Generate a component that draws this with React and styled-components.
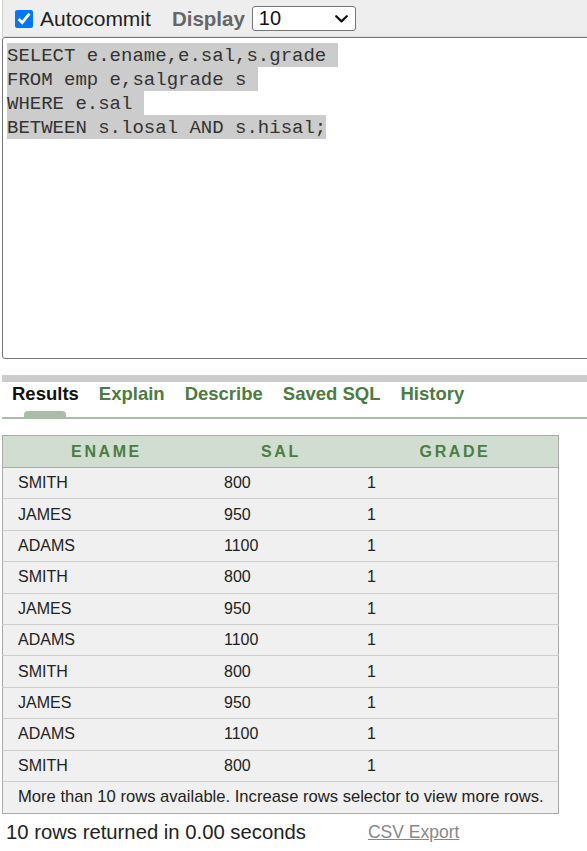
import React from "react";
import styled, { createGlobalStyle } from "styled-components";

const Global = createGlobalStyle`
  html, body { margin: 0; padding: 0; background: #fff; overflow: hidden; }
  body { font-family: "Liberation Sans", Arial, sans-serif; color: #222; }
`;

const Page = styled.div`
  padding-left: 2px;
  width: 640px;
`;

const TopBar = styled.div`
  display: flex;
  align-items: center;
  height: 36px;
  background: #eeeeee;
  border-left: 1px solid #cfcfcf;
  border-bottom: 1px solid #dcdcdc;
  padding-left: 12px;
`;

const Check = styled.input`
  width: 18px;
  height: 18px;
  margin: 1px 0 0 0;
  accent-color: #0075ff;
`;

const Label = styled.span`
  font-size: 21px;
  color: #222;
  margin-left: 7px;
  margin-top: 2px;
`;

const DisplayLabel = styled.span`
  font-size: 20.5px;
  font-weight: bold;
  color: #666;
  margin-left: 21px;
  margin-top: 2px;
`;

const SelectWrap = styled.div`
  position: relative;
  margin-left: 7px;
  width: 104px;
  height: 25px;
`;

const Select = styled.select`
  appearance: none;
  -webkit-appearance: none;
  width: 104px;
  height: 25px;
  box-sizing: border-box;
  border: 1px solid #767676;
  border-radius: 3px;
  background: #fff;
  font-family: "Liberation Sans", Arial, sans-serif;
  font-size: 20px;
  color: #111;
  padding: 0 0 0 6px;
  line-height: 23px;
  margin: 0;
`;

const Chevron = styled.svg`
  position: absolute;
  right: 8px;
  top: 9px;
  pointer-events: none;
`;

const Editor = styled.div`
  box-sizing: border-box;
  height: 322px;
  border: 1px solid #767676;
  border-radius: 3px;
  padding: 5px 4px;
  font-family: "Liberation Mono", "DejaVu Sans Mono", monospace;
  font-size: 19px;
  line-height: 24px;
  color: #333;
  background: #fff;
`;

const Line = styled.div`
  white-space: pre;
  height: 24px;
`;

const Sel = styled.span`
  background: #cccccc;
  display: inline-block;
  height: 24px;
  padding-top: 1px;
  box-sizing: border-box;
`;

const Divider = styled.div`
  margin-top: 16px;
  height: 7px;
  background: #cccccc;
`;

const TabBar = styled.div`
  display: flex;
  gap: 20px;
  padding-left: 10px;
  height: 35px;
  border-bottom: 2px solid #a8bfa5;
`;

const Tab = styled.div`
  display: flex;
  flex-direction: column;
  align-items: center;
  font-size: 18.5px;
  font-weight: bold;
  line-height: 23px;
  color: ${(p) => (p.$active ? "#111" : "#4a7d41")};
`;

const Indicator = styled.div`
  margin-top: auto;
  width: 42px;
  height: 6px;
  border-radius: 4px 4px 0 0;
  background: #a8bfa5;
`;

const Table = styled.table`
  margin-top: 16px;
  width: 557px;
  border-collapse: collapse;
  border: 1px solid #a9a9a9;
  font-size: 16px;
`;

const Th = styled.th`
  height: 31px;
  padding: 0;
  background: #d2ddd1;
  color: #4a7d41;
  font-size: 16px;
  font-weight: bold;
  letter-spacing: 2.6px;
  text-align: center;
  border-bottom: 1px solid #a9a9a9;
  width: ${(p) => p.$w}px;
`;

const Td = styled.td`
  height: 30.4px;
  padding: 0 0 0 ${(p) => p.$pl || 15}px;
  background: #f0f0f0;
  color: #222;
  border-top: 1px solid #cdcdcd;
  text-align: left;
`;

const FootTd = styled.td`
  height: 31px;
  padding: 0 0 0 15px;
  background: #f0f0f0;
  color: #222;
  font-size: 16.6px;
  border-top: 1px solid #cdcdcd;
`;

const Status = styled.div`
  display: flex;
  align-items: center;
  height: 38px;
  padding-left: 4px;
`;

const StatusText = styled.span`
  font-size: 20.3px;
  color: #222;
`;

const CsvLink = styled.a`
  margin-left: 62px;
  font-size: 17.5px;
  color: #888;
  text-decoration: underline;
`;

const rows = [
  ["SMITH", "800", "1"],
  ["JAMES", "950", "1"],
  ["ADAMS", "1100", "1"],
  ["SMITH", "800", "1"],
  ["JAMES", "950", "1"],
  ["ADAMS", "1100", "1"],
  ["SMITH", "800", "1"],
  ["JAMES", "950", "1"],
  ["ADAMS", "1100", "1"],
  ["SMITH", "800", "1"],
];

const sql = [
  "SELECT e.ename,e.sal,s.grade ",
  "FROM emp e,salgrade s ",
  "WHERE e.sal ",
  "BETWEEN s.losal AND s.hisal;",
];

export default function App() {
  return (
    <Page>
      <Global />
      <TopBar>
        <Check type="checkbox" defaultChecked />
        <Label>Autocommit</Label>
        <DisplayLabel>Display</DisplayLabel>
        <SelectWrap>
          <Select defaultValue="10">
            <option value="10">10</option>
            <option value="25">25</option>
            <option value="50">50</option>
            <option value="100">100</option>
          </Select>
          <Chevron width="13" height="8" viewBox="0 0 13 8">
            <path d="M1.2 1.2 L6.5 6.4 L11.8 1.2" fill="none" stroke="#111" strokeWidth="2.2" strokeLinecap="round" strokeLinejoin="round" />
          </Chevron>
        </SelectWrap>
      </TopBar>
      <Editor>
        {sql.map((l, i) => (
          <Line key={i}>
            <Sel>{l}</Sel>
          </Line>
        ))}
      </Editor>
      <Divider />
      <TabBar>
        <Tab $active>
          Results
          <Indicator />
        </Tab>
        <Tab>Explain</Tab>
        <Tab>Describe</Tab>
        <Tab>Saved SQL</Tab>
        <Tab>History</Tab>
      </TabBar>
      <Table>
        <thead>
          <tr>
            <Th $w={207}>ENAME</Th>
            <Th $w={142}>SAL</Th>
            <Th $w={206}>GRADE</Th>
          </tr>
        </thead>
        <tbody>
          {rows.map((r, i) => (
            <tr key={i}>
              <Td>{r[0]}</Td>
              <Td $pl={14}>{r[1]}</Td>
              <Td>{r[2]}</Td>
            </tr>
          ))}
          <tr>
            <FootTd colSpan={3}>
              More than 10 rows available. Increase rows selector to view more rows.
            </FootTd>
          </tr>
        </tbody>
      </Table>
      <Status>
        <StatusText>10 rows returned in 0.00 seconds</StatusText>
        <CsvLink href="#">CSV Export</CsvLink>
      </Status>
    </Page>
  );
}
